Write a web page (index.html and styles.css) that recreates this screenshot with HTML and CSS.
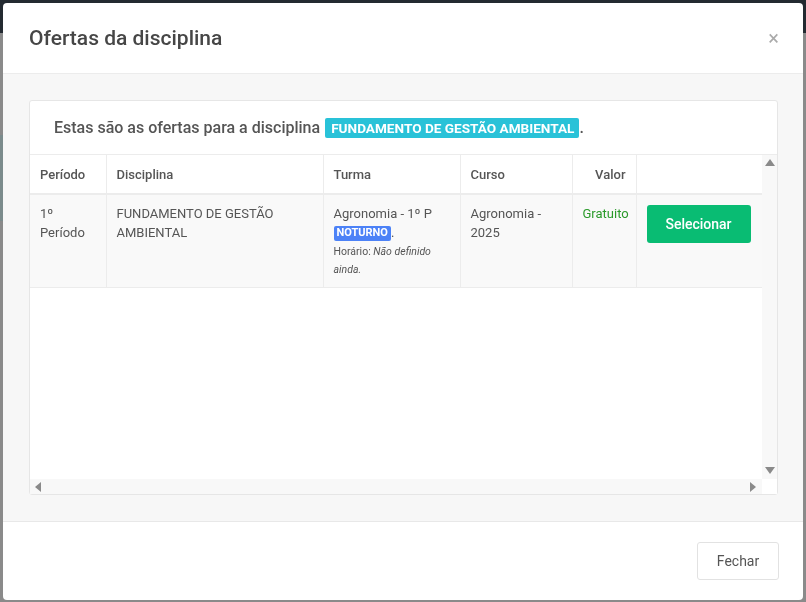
FILE: index.html
```html
<!DOCTYPE html>
<html>
<head>
    <meta charset="utf-8">
    <title>Ofertas da disciplina</title>
    <link rel="stylesheet" href="styles.css">
</head>
<body>
    <div class="page_bar"></div>
    <div class="page_side"></div>

    <div class="modal">
        <header class="modal_header">
            <h4 class="modal_title">Ofertas da disciplina</h4>
            <span class="modal_close">&times;</span>
        </header>
        <section class="modal_body">
            <div class="card">
                <p class="card_intro">
                    Estas são as ofertas para a disciplina
                    <span class="label_info">FUNDAMENTO DE GESTÃO AMBIENTAL</span>.
                </p>
                <div class="table_wrap">
                    <div class="table_view">
                        <table class="offers">
                            <thead>
                                <tr>
                                    <th class="col_periodo">Período</th>
                                    <th class="col_disciplina">Disciplina</th>
                                    <th class="col_turma">Turma</th>
                                    <th class="col_curso">Curso</th>
                                    <th class="col_valor">Valor</th>
                                    <th class="col_acao"></th>
                                </tr>
                            </thead>
                            <tbody>
                                <tr>
                                    <td>1º<br>Período</td>
                                    <td>FUNDAMENTO DE GESTÃO<br>AMBIENTAL</td>
                                    <td>
                                        Agronomia - 1º P<br>
                                        <span class="label_turno">NOTURNO</span>.
                                        <small class="horario">Horário: <i>Não definido ainda.</i></small>
                                    </td>
                                    <td>Agronomia -<br>2025</td>
                                    <td class="col_valor"><span class="gratuito">Gratuito</span></td>
                                    <td><button class="btn_select" type="button">Selecionar</button></td>
                                </tr>
                            </tbody>
                        </table>
                    </div>
                    <!-- barras de rolagem desenhadas -->
                    <div class="scroll_v">
                        <span class="arrow arrow_up"></span>
                        <span class="arrow arrow_down"></span>
                    </div>
                    <div class="scroll_h">
                        <span class="arrow arrow_left"></span>
                        <span class="arrow arrow_right"></span>
                    </div>
                    <div class="scroll_corner"></div>
                </div>
            </div>
        </section>
        <footer class="modal_footer">
            <button class="btn_close" type="button">Fechar</button>
        </footer>
    </div>
</body>
</html>
```

FILE: styles.css
```css
*{
    box-sizing: border-box;
    padding: 0;
    margin: 0;
}
body{
    font-family: Roboto, "Liberation Sans", sans-serif;
    background: #8a8a8a;
    width: 806px;
    height: 602px;
    overflow: hidden;
}
.page_bar{
    height: 33px;
    background: #232a31;
}
.page_side{
    margin-top: 102px;
    width: 4px;
    height: 86px;
    background: #7b8b8c;
}
.modal{
    position: fixed;
    top: 3px;
    left: 3px;
    width: 800px;
    height: 597px;
    background: #fff;
    border-radius: 4px;
    display: flex;
    flex-direction: column;
    overflow: hidden;
}
.modal_header{
    display: flex;
    justify-content: space-between;
    align-items: center;
    height: 71px;
    padding: 0 24px 0 26px;
    border-bottom: 1px solid #ececec;
}
.modal_title{
    font-size: 21px;
    font-weight: 500;
    color: #464646;
    padding-bottom: 1px;
}
.modal_close{
    font-size: 20px;
    color: #aaa;
    line-height: 1;
}
.modal_body{
    flex: 1;
    background: #f7f7f7;
    padding: 26px 25px 26px 26px;
}
.card{
    background: #fff;
    border: 1px solid #e6e6e6;
    border-radius: 3px;
    height: 100%;
    display: flex;
    flex-direction: column;
}
.card_intro{
    font-size: 16px;
    font-weight: 500;
    color: #555;
    padding: 16px 24px 15px;
    line-height: 22px;
    border-bottom: 1px solid #ececec;
}
.label_info{
    display: inline-block;
    background: #29c2d8;
    color: #fff;
    font-size: 13.6px;
    font-weight: 700;
    line-height: 20px;
    padding: 0 5px 0 6px;
    border-radius: 2px;
    margin-left: 1px;
}
.table_wrap{
    flex: 1;
    display: grid;
    grid-template-columns: 1fr 15px;
    grid-template-rows: 1fr 15px;
    min-height: 0;
}
.table_view{
    overflow: hidden;
}
.scroll_v,.scroll_h{
    background: #f8f8f8;
    display: flex;
    justify-content: space-between;
    align-items: center;
}
.scroll_v{
    flex-direction: column;
    padding: 4px 0 5px;
}
.scroll_h{
    padding: 0 6px 0 5px;
}
.scroll_corner{
    background: #fff;
}
.arrow{
    width: 0;
    height: 0;
    border: 5px solid transparent;
}
.arrow_up{ border-bottom: 7px solid #8a8a8a; border-top: 0; }
.arrow_down{ border-top: 7px solid #8a8a8a; border-bottom: 0; }
.arrow_left{ border-right: 6px solid #8a8a8a; border-left: 0; }
.arrow_right{ border-left: 6px solid #8a8a8a; border-right: 0; }
.offers{
    border-collapse: collapse;
    width: 732px;
    font-size: 13px;
    color: #555;
    line-height: 18.5px;
    table-layout: fixed;
}
.offers th,.offers td{
    border: 1px solid #ececec;
    border-top: 0;
    text-align: left;
    vertical-align: top;
}
.offers th{
    font-weight: 500;
    border-bottom: 2px solid #ececec;
    height: 39px;
    padding: 11px 10px 7px;
}
.offers td{
    padding: 10px 10px 8px;
    background: #f9f9f9;
}
.offers th:first-child,.offers td:first-child{
    border-left: 0;
}
.col_periodo{ width: 76px; }
.col_disciplina{ width: 217px; }
.col_turma{ width: 137px; }
.col_curso{ width: 112px; }
.offers .col_valor{ width: 64px; text-align: right; }
.col_acao{ width: 126px; }
.label_turno{
    display: inline-block;
    background: #4c82f7;
    color: #fff;
    font-size: 11px;
    font-weight: 700;
    line-height: 14px;
    padding: 0 3px 1px;
    border-radius: 2px;
    vertical-align: 1px;
}
.horario{
    display: block;
    font-size: 10.5px;
    line-height: 18px;
    padding-top: 1px;
    color: #555;
}
.gratuito{
    color: #2b9a2b;
}
.btn_select{
    width: 104px;
    height: 38px;
    border: 0;
    border-radius: 3px;
    background: #09bc73;
    color: #fff;
    font-family: inherit;
    font-size: 14px;
    font-weight: 500;
}
.modal_footer{
    height: 79px;
    border-top: 1px solid #e8e8e8;
    display: flex;
    justify-content: flex-end;
    align-items: flex-start;
    padding: 20px 24px 0 0;
}
.btn_close{
    width: 82px;
    height: 38px;
    background: #fff;
    border: 1px solid #e2e2e2;
    border-radius: 3px;
    font-family: inherit;
    font-size: 14px;
    color: #555;
}
```
